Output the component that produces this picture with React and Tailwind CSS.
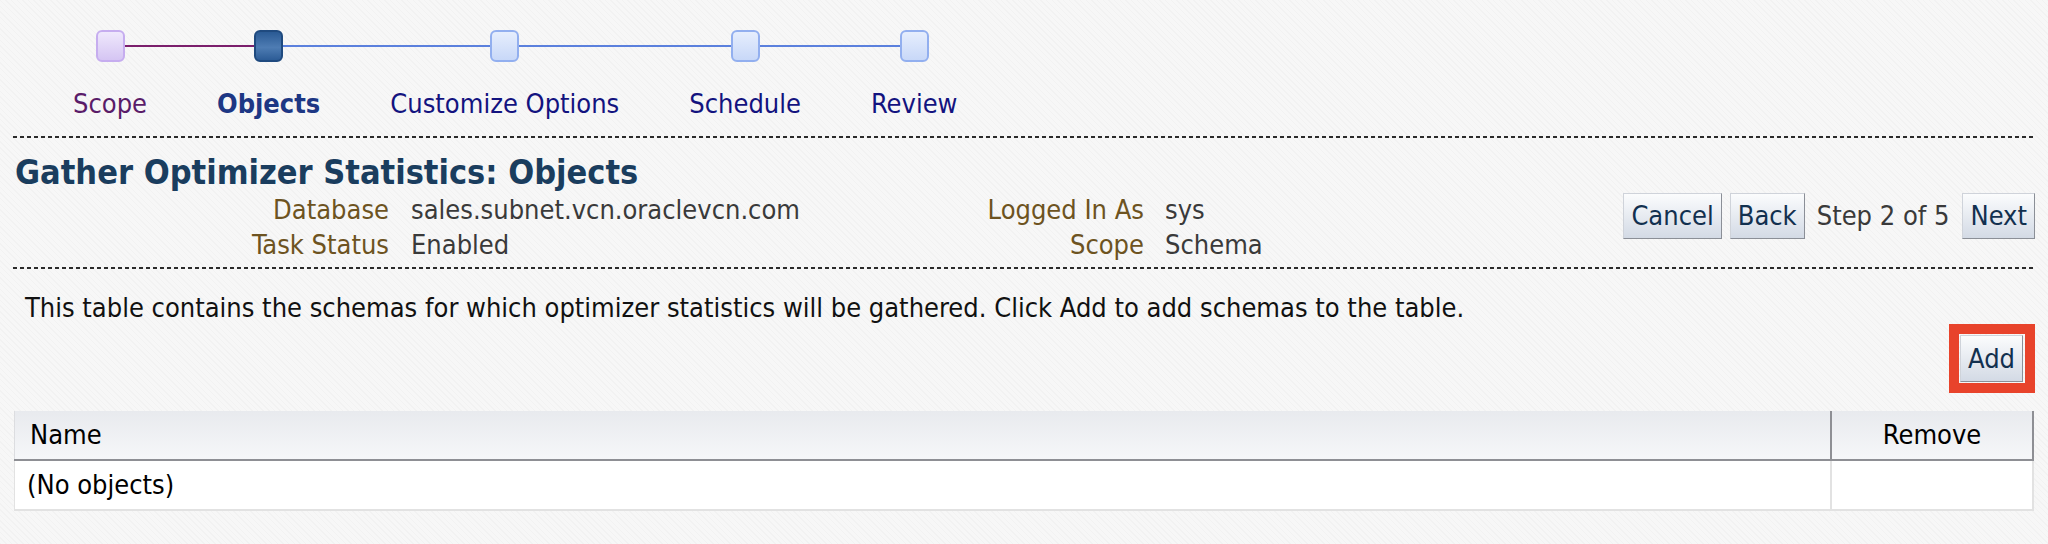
// Gather Optimizer Statistics wizard, step 2 (Objects).
const FONT = "font-['DejaVu_Sans_Condensed','DejaVu_Sans',sans-serif]";

const steps = [
  { label: "Scope", state: "done" },
  { label: "Objects", state: "current" },
  { label: "Customize Options", state: "todo" },
  { label: "Schedule", state: "todo" },
  { label: "Review", state: "todo" },
];

const lineColor = (i, side) => {
  if (side === "left" && i === 0) return "bg-transparent";
  if (side === "right" && i === steps.length - 1) return "bg-transparent";
  if ((i === 0 && side === "right") || (i === 1 && side === "left")) return "bg-[#7b1f6c]";
  return "bg-[#5b80dd]";
};

function Node({ state }) {
  if (state === "done")
    return (
      <div className="h-[32px] w-[29px] shrink-0 rounded-[6px] border-2 border-[#c6adef] bg-[linear-gradient(#efe8fc,#d5c5f3)]" />
    );
  if (state === "current")
    return (
      <div className="h-[32px] w-[29px] shrink-0 rounded-[6px] border-2 border-[#1f4a7f] bg-[linear-gradient(#2a5a94,#4e7cb3_55%,#2c5c96)]" />
    );
  return (
    <div className="h-[32px] w-[29px] shrink-0 rounded-[6px] border-2 border-[#92afef] bg-[linear-gradient(#e6eefd,#c8d8f8)]" />
  );
}

function Train() {
  return (
    <div className="flex pl-[38px] pt-[30px]">
      {steps.map((s, i) => (
        <div key={s.label} className="flex flex-col items-center">
          <div className="flex h-[32px] w-full items-center">
            <div className={`h-[2px] flex-1 ${lineColor(i, "left")}`} />
            <Node state={s.state} />
            <div className={`h-[2px] flex-1 ${lineColor(i, "right")}`} />
          </div>
          <span
            className={`mt-[26px] px-[35px] text-[27px] leading-[32px] ${
              s.state === "done"
                ? "text-[#5a1c69]"
                : s.state === "current"
                ? "font-bold text-[#1d3784]"
                : "text-[#13137f]"
            }`}
          >
            {s.label}
          </span>
        </div>
      ))}
    </div>
  );
}

function Dashed({ className = "" }) {
  return (
    <div
      className={`h-[2px] bg-[linear-gradient(90deg,#2b2b2b_57%,transparent_57%)] bg-[length:7px_2px] bg-repeat-x ${className}`}
    />
  );
}

function Btn({ children, className = "" }) {
  return (
    <button
      className={`h-[46px] border border-t-[#cfd3da] border-l-[#cfd3da] border-r-[#8b8f97] border-b-[#8b8f97] bg-[linear-gradient(#fbfcfd,#d3dae5)] px-[7px] text-[27px] leading-[32px] text-[#12304f] ${className}`}
    >
      {children}
    </button>
  );
}

export default function App() {
  return (
    <div
      className={`h-[544px] w-full overflow-hidden bg-[#f5f5f5] bg-[repeating-linear-gradient(45deg,#f2f2f2_0px,#f2f2f2_1px,#f7f7f7_1px,#f7f7f7_4px)] ${FONT}`}
    >
      <Train />

      <div className="px-[13px]">
        <Dashed className="mt-[16px]" />

        <h1 className="mt-[14px] pl-[2px] text-[34px] font-bold leading-[40px] text-[#1a3d5e]">
          Gather Optimizer Statistics: Objects
        </h1>

        <div className="flex items-start justify-between">
          <div className="grid grid-cols-[376px_355px_400px_auto] text-[27px] leading-[35px]">
            <span className="text-right text-[#6d5321]">Database</span>
            <span className="pl-[22px] text-[#3a3a3a]">sales.subnet.vcn.oraclevcn.com</span>
            <span className="text-right text-[#6d5321]">Logged In As</span>
            <span className="pl-[21px] text-[#3a3a3a]">sys</span>
            <span className="text-right text-[#6d5321]">Task Status</span>
            <span className="pl-[22px] text-[#3a3a3a]">Enabled</span>
            <span className="text-right text-[#6d5321]">Scope</span>
            <span className="pl-[21px] text-[#3a3a3a]">Schema</span>
          </div>

          <div className="mt-[1px] flex items-center">
            <Btn>Cancel</Btn>
            <Btn className="ml-[8px]">Back</Btn>
            <span className="ml-[12px] text-[27px] text-[#3a3a3a]">Step 2 of 5</span>
            <Btn className="ml-[13px]">Next</Btn>
          </div>
        </div>

        <Dashed className="mt-[5px]" />

        <p className="mt-[23px] pl-[12px] text-[27px] leading-[32px] text-[#111]">
          This table contains the schemas for which optimizer statistics will be gathered. Click Add to add schemas to the table.
        </p>

        <div className="flex justify-end">
          <div className="border-[10px] border-[#e8432b] py-[1px] pl-[1px] pr-[2px]">
            <Btn className="h-[47px] px-[6px]">Add</Btn>
          </div>
        </div>

        <table className="mt-[18px] ml-[1px] w-[2020px] border-collapse text-[27px] leading-[32px] text-black">
          <thead>
            <tr className="bg-[linear-gradient(#e8eaee,#f6f7f9)]">
              <th className="h-[49px] border-l border-l-[#dcdde0] border-b-2 border-b-[#8e8f94] pl-[15px] text-left font-normal">
                Name
              </th>
              <th className="w-[202px] border-x-2 border-x-[#8e8f94] border-b-2 border-b-[#8e8f94] text-center font-normal">
                Remove
              </th>
            </tr>
          </thead>
          <tbody>
            <tr className="bg-white">
              <td className="h-[50px] border-l border-b-2 border-[#e2e2e2] pl-[12px]">(No objects)</td>
              <td className="border-x-2 border-b-2 border-[#e2e2e2]" />
            </tr>
          </tbody>
        </table>
      </div>
    </div>
  );
}
